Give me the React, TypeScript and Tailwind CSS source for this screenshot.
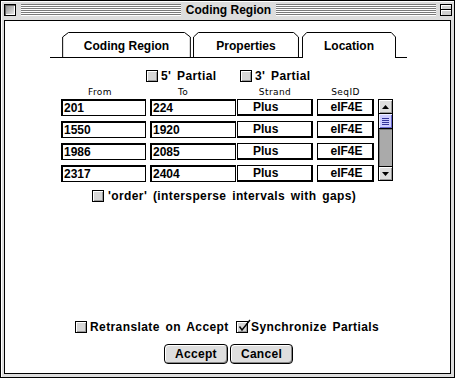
import React from "react";

const SANS = "font-['Liberation_Sans',Arial,sans-serif]";
const SMALL = "font-['DejaVu_Sans',Verdana,sans-serif]";
const LABEL = "tracking-[0.4px] [word-spacing:2px]";

function Box({ checked }: { checked?: boolean }) {
  return (
    <span className="relative inline-block w-[12px] h-[12px] shrink-0 border border-black bg-[#d6d6d6] shadow-[inset_1px_1px_0_#fff,inset_-1px_-1px_0_#999]">
      {checked && (
        <svg className="absolute left-[1px] top-[-3px]" width="13" height="13" viewBox="0 0 13 13">
          <path d="M1.5 7.5 L4 11 L12 1" stroke="#000" strokeWidth="1.4" fill="none" />
        </svg>
      )}
    </span>
  );
}

function Tab({ className, label, selected }: { className: string; label: string; selected?: boolean }) {
  return (
    <div className={`relative h-[26px] -mb-px bg-white flex items-center justify-center ${className}`}>
      <svg className="absolute inset-0 w-full h-full" preserveAspectRatio="none" viewBox="0 0 100 26">
        <path
          d="M0.5 26 L0.5 5 L5 0.5 L95 0.5 L99.5 5 L99.5 26"
          stroke="#000"
          strokeWidth="1"
          fill="none"
          vectorEffect="non-scaling-stroke"
        />
      </svg>
      {!selected && <div className="absolute left-0 right-0 bottom-0 h-px bg-black" />}
      <span className={`relative ${SANS} font-bold text-[12px] leading-[14px] text-black mt-[1px]`}>{label}</span>
    </div>
  );
}

function Field({ className, value }: { className: string; value: string }) {
  return (
    <div className={`h-[17px] border-t-2 border-l-2 border-r border-b border-black bg-white flex items-center pl-[1px] ${SANS} font-bold text-[12px] leading-[14px] text-black ${className}`}>
      {value}
    </div>
  );
}

function Pop({ className, value }: { className: string; value: string }) {
  return (
    <div className={`h-[17px] border-t border-l border-r-2 border-b-2 border-black bg-white flex items-center ${SANS} font-bold text-[12px] leading-[14px] text-black ${className}`}>
      {value}
    </div>
  );
}

function Row({ from, to }: { from: string; to: string }) {
  return (
    <div className="flex">
      <Field className="w-[85px]" value={from} />
      <Field className="w-[86px] ml-[4px]" value={to} />
      <Pop className="w-[76px] ml-[1px] pl-[15px]" value="Plus" />
      <Pop className="w-[57px] ml-[4px] justify-center pl-[3px]" value="eIF4E" />
    </div>
  );
}

function Arrow({ up }: { up?: boolean }) {
  return (
    <svg width="7" height="4" viewBox="0 0 7 4">
      <path d={up ? "M0 4 L3.5 0 L7 4 Z" : "M0 0 L3.5 4 L7 0 Z"} fill="#000" />
    </svg>
  );
}

function Button({ className, label }: { className: string; label: string }) {
  return (
    <div className={`h-[20px] rounded-[4px] border border-black bg-[#dedede] shadow-[inset_1px_1px_0_#fff,inset_-1px_-1px_0_#888] flex items-center justify-center ${SANS} font-bold text-[12px] leading-[14px] tracking-[0.3px] text-black ${className}`}>
      {label}
    </div>
  );
}

export default function App() {
  return (
    <div className="w-[457px] h-[380px] bg-white">
      <div className="w-[455px] h-[378px] border border-black bg-[#dddddd] shadow-[inset_1px_1px_0_#fff] flex flex-col">
        {/* Title bar */}
        <div className="h-[19px] flex items-start">
          <div className="ml-[3px] mt-[3px] w-[12px] h-[12px] border border-black bg-[linear-gradient(135deg,#8a8a8a,#eeeeee)] shadow-[inset_1px_1px_0_#666,inset_-1px_-1px_0_#fff]" />
          <div className="ml-[5px] mt-[3px] h-[12px] flex-1 bg-[repeating-linear-gradient(to_bottom,#7a7a7a_0px,#7a7a7a_1px,#ffffff_1px,#ffffff_2px)]" />
          <div className={`px-[5px] ${SANS} font-bold text-[12px] leading-[19px] text-black`}>Coding Region</div>
          <div className="mt-[3px] h-[12px] flex-1 bg-[repeating-linear-gradient(to_bottom,#7a7a7a_0px,#7a7a7a_1px,#ffffff_1px,#ffffff_2px)]" />
          <div className="ml-[4px] mr-[2px] mt-[3px] w-[12px] h-[12px] border border-black bg-[#d0d0d0] flex flex-col">
            <div className="h-[5px] border-b border-black shadow-[inset_1px_1px_0_#fff]" />
            <div className="flex-1 shadow-[inset_1px_1px_0_#fff]" />
          </div>
        </div>

        {/* Content */}
        <div className="mx-[3px] h-[354px] border border-black bg-white flex flex-col">
          {/* Tabs */}
          <div className="ml-[45px] mt-[11px] w-[357px] h-[26px] border-b border-black flex items-end">
            <Tab className="ml-[12px] w-[129px]" label="Coding Region" />
            <Tab className="ml-[2px] w-[106px]" label="Properties" />
            <Tab className="ml-[3px] w-[94px]" label="Location" selected />
          </div>

          {/* Partial checkboxes */}
          <div className={`mt-[12px] ml-[141px] h-[12px] flex items-center ${SANS} font-bold text-[12px] leading-[12px] text-black ${LABEL}`}>
            <div className="w-[94px] flex items-center gap-[3px]">
              <Box />
              <span>5' Partial</span>
            </div>
            <div className="flex items-center gap-[3px]">
              <Box />
              <span>3' Partial</span>
            </div>
          </div>

          {/* Column headers */}
          <div className={`mt-[5px] ml-[56px] h-[10px] flex items-center ${SMALL} text-[9px] leading-[10px] tracking-[0.4px] text-black`}>
            <div className="w-[85px] pl-[27px]">From</div>
            <div className="w-[86px] ml-[4px] pl-[28px]">To</div>
            <div className="w-[76px] ml-[1px] text-center">Strand</div>
            <div className="w-[57px] ml-[4px] text-center">SeqID</div>
          </div>

          {/* Rows + scrollbar */}
          <div className="mt-[2px] ml-[56px] flex items-start">
            <div className="flex flex-col gap-[5px]">
              <Row from="201" to="224" />
              <Row from="1550" to="1920" />
              <Row from="1986" to="2085" />
              <Row from="2317" to="2404" />
            </div>
            <div className="ml-[4px] w-[15px] h-[82px] border border-black flex flex-col bg-[#a8a8a8]">
              <div className="h-[14px] border-b border-black bg-[#dddddd] shadow-[inset_1px_1px_0_#fff,inset_-1px_-1px_0_#999] flex items-center justify-center">
                <Arrow up />
              </div>
              <div className="h-[15px] border-b border-black bg-[#ccccff] shadow-[inset_1px_1px_0_#eeeeff,inset_-1px_-1px_0_#6666cc] flex flex-col items-center justify-center gap-[1px]">
                <div className="w-[7px] h-px bg-[#333399]" />
                <div className="w-[7px] h-px bg-[#333399]" />
                <div className="w-[7px] h-px bg-[#333399]" />
                <div className="w-[7px] h-px bg-[#333399]" />
              </div>
              <div className="flex-1 bg-[#aaaaaa] shadow-[inset_1px_1px_0_#777]" />
              <div className="h-[14px] border-t border-black bg-[#dddddd] shadow-[inset_1px_1px_0_#fff,inset_-1px_-1px_0_#999] flex items-center justify-center">
                <Arrow />
              </div>
            </div>
          </div>

          {/* order checkbox */}
          <div className={`mt-[8px] ml-[87px] h-[12px] flex items-center gap-[4px] ${SANS} font-bold text-[12px] leading-[12px] text-black ${LABEL}`}>
            <Box />
            <span>'order' (intersperse intervals with gaps)</span>
          </div>

          {/* bottom checkboxes */}
          <div className={`mt-[119px] ml-[70px] h-[12px] flex items-center ${SANS} font-bold text-[12px] leading-[12px] text-black ${LABEL}`}>
            <div className="w-[161px] flex items-center gap-[3px]">
              <Box />
              <span>Retranslate on Accept</span>
            </div>
            <div className="flex items-center gap-[3px]">
              <Box checked />
              <span>Synchronize Partials</span>
            </div>
          </div>

          {/* buttons */}
          <div className="mt-[11px] ml-[159px] flex gap-[2px]">
            <Button className="w-[64px]" label="Accept" />
            <Button className="w-[63px]" label="Cancel" />
          </div>
        </div>
      </div>
    </div>
  );
}
